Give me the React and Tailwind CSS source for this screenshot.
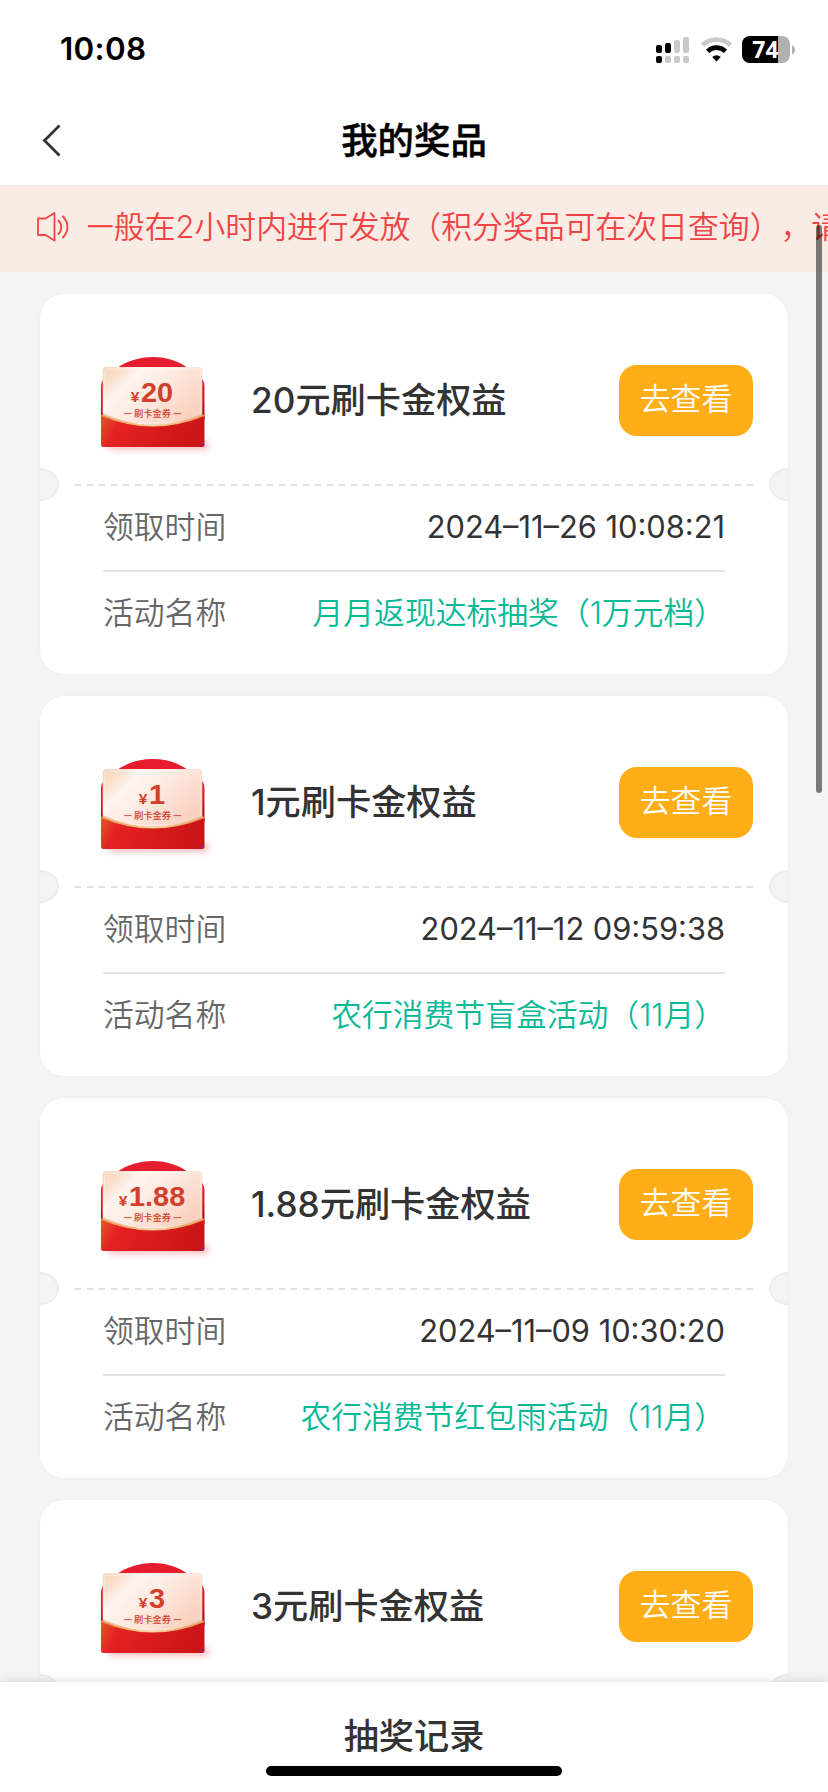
import React from "react";

const prizes = [
  {
    amount: "20",
    title: "20元刷卡金权益",
    time: "2024–11–26 10:08:21",
    activity: "月月返现达标抽奖（1万元档）",
  },
  {
    amount: "1",
    title: "1元刷卡金权益",
    time: "2024–11–12 09:59:38",
    activity: "农行消费节盲盒活动（11月）",
  },
  {
    amount: "1.88",
    title: "1.88元刷卡金权益",
    time: "2024–11–09 10:30:20",
    activity: "农行消费节红包雨活动（11月）",
  },
  {
    amount: "3",
    title: "3元刷卡金权益",
  },
];

function StatusBar() {
  return (
    <div className="flex h-[96px] items-center justify-between pl-[60px] pr-[33px] pt-[4px]">
      <span className="text-[31.4px] font-semibold leading-none tracking-[0.3px] text-black">10:08</span>
      <svg width="140" height="30" viewBox="654 35 140 30">
        <g fill="#c9c9c9">
          <rect x="673" y="40" width="6" height="13" rx="2" />
          <rect x="682" y="37" width="6" height="16" rx="2" />
          <rect x="664" y="56" width="6" height="7" rx="2" />
          <rect x="673" y="56" width="6" height="7" rx="2" />
          <rect x="682" y="56" width="6" height="7" rx="2" />
        </g>
        <rect x="655" y="45" width="6" height="8" rx="2" />
        <rect x="664" y="43" width="6" height="10" rx="2" />
        <rect x="655" y="56" width="6" height="7" rx="2" />
        <g fill="none" strokeWidth="4.6">
          <path d="M701.5 45.2a20.3 20.3 0 0 1 28 0" stroke="#c9c9c9" />
          <path d="M706.6 51.3a12.6 12.6 0 0 1 17.8 0" stroke="#000" />
        </g>
        <path d="M711.2 57a6.2 6.2 0 0 1 8.6 0l-4.3 4.4z" />
        <clipPath id="battery">
          <rect x="741" y="36" width="48" height="27" rx="8" />
        </clipPath>
        <g clipPath="url(#battery)">
          <rect x="741" y="36" width="48" height="27" fill="#b0b0b0" />
          <rect x="741" y="36" width="36" height="27" />
        </g>
        <path d="M791 45.3c4 1.5 4 7.700 0 9.2z" fill="#b0b0b0" />
        <text
          x="764.5"
          y="58"
          textAnchor="middle"
          fill="#fff"
          fontSize="23"
          fontWeight="700"
          fontFamily="'Open Sans'"
        >
          74
        </text>
      </svg>
    </div>
  );
}

function Envelope({ amount }) {
  return (
    <svg width="120" height="106" viewBox="95 350 120 106">
      <defs>
        <linearGradient id="paper" x1="0" y1="0" x2="1" y2="0.6">
          <stop offset="0" stopColor="#f6d6ba" />
          <stop offset="0.15" stopColor="#f9dfcb" />
          <stop offset="0.3" stopColor="#fef4ef" />
          <stop offset="0.55" stopColor="#fdebe2" />
          <stop offset="1" stopColor="#fad2c0" />
        </linearGradient>
        <linearGradient id="front" x1="0" y1="0" x2="1" y2="0.15">
          <stop offset="0" stopColor="#e2582a" />
          <stop offset="0.2" stopColor="#e42123" />
          <stop offset="1" stopColor="#cb1516" />
        </linearGradient>
        <linearGradient id="gold" x1="0" y1="0" x2="1" y2="0">
          <stop offset="0" stopColor="#f08a3c" />
          <stop offset="0.5" stopColor="#f8d79b" />
          <stop offset="1" stopColor="#ee9a4b" />
        </linearGradient>
        <linearGradient id="back" x1="0" y1="0" x2="0" y2="1">
          <stop offset="0" stopColor="#e8202f" />
          <stop offset="0.5" stopColor="#dc1a28" />
          <stop offset="1" stopColor="#8f0c14" />
        </linearGradient>
        <filter id="blur" x="-20%" y="-100%" width="140%" height="300%">
          <feGaussianBlur stdDeviation="3" />
        </filter>
      </defs>
      <rect x="108" y="441" width="101" height="9" rx="4" fill="#f3808c" opacity="0.5" filter="url(#blur)" />
      <path d="M117 368c10-7 22-11 36-11s25 4 35 11v10h-71z" fill="#e51d2e" />
      <path d="M101 420v-33c0-5 2-8 5-10h94c3 2 4.5 5 4.5 10v33z" fill="url(#back)" />
      <rect x="102.7" y="367" width="99.6" height="58" rx="4" fill="url(#paper)" />
      <rect x="104.7" y="369" width="95.6" height="54" rx="3" fill="none" stroke="#fff" strokeOpacity="0.55" strokeWidth="0.8" />
      <path d="M103 416v-3c18 8 34 12 50 12s33-4 50-12v12h-100z" fill="#d9a68c" opacity="0.5" />
      <path
        d="M101 415c19 7.5 35 11 51.5 11s33-3.500 52-11v29.5a2.500 2.500 0 0 1-2.500 2.500h-98.500a2.500 2.500 0 0 1-2.500-2.500z"
        fill="url(#front)"
      />
      <path d="M101 415.3c19 7.5 35 10.5 51.5 10.5s33-3 52-10.5" fill="none" stroke="url(#gold)" strokeWidth="1.5" />
      <circle cx="202.5" cy="444.5" r="1.8" fill="#9a1c86" opacity="0.8" />
      <g fill="#d2402c">
        <text
          transform="translate(152 402) scale(1.07 1)"
          textAnchor="middle"
          fontFamily="'Liberation Sans'"
          fontWeight="700"
          fontSize="27"
        >
          <tspan fontSize="14.5">¥</tspan>
          <tspan dx="1.5">{amount}</tspan>
        </text>
        <text
          x="152.5"
          y="416.5"
          textAnchor="middle"
          fontFamily="'Noto Sans CJK SC'"
          fontWeight="500"
          fontSize="9.3"
        >
          刷卡金券
        </text>
        <rect x="124" y="413.2" width="7.7" height="0.9" />
        <rect x="173.5" y="413.2" width="7.7" height="0.9" />
      </g>
    </svg>
  );
}

function PrizeCard({ prize }) {
  return (
    <div className="relative h-[380px] shrink-0 overflow-hidden rounded-[24px] bg-white shadow-[0_0_3px_rgba(0,0,0,0.04)]">
      <div className="absolute -left-[19px] top-[174px] h-[33px] w-[38px] rounded-[50%] border-2 border-[#ededed] bg-[#f4f4f4]"></div>
      <div className="absolute -right-[19px] top-[174px] h-[33px] w-[38px] rounded-[50%] border-2 border-[#ededed] bg-[#f4f4f4]"></div>

      <div className="flex h-[190px] items-center pl-[55px] pr-[35px]">
        <div className="mt-[28px]">
          <Envelope amount={prize.amount} />
        </div>
        <p className="ml-[36px] mt-[21px] flex-1 text-[35.2px] font-medium leading-[48px] text-[#333]">
          {prize.title}
        </p>
        <button className="mt-[22px] h-[71px] w-[134px] rounded-[18px] bg-[#ffae17] pb-[1px] text-[30.8px] font-[350] text-white">
          去查看
        </button>
      </div>
      <div className="ml-[35px] mr-[34px] h-[2px] bg-[repeating-linear-gradient(90deg,#dfdfdf_0_6px,transparent_6px_12px)]"></div>

      {prize.time && (
        <div className="ml-[63px] mr-[63px] text-[30.8px] font-[350]">
          <div className="flex h-[86px] items-center justify-between border-b-2 border-[#e3e3e3] pb-[2px]">
            <span className="text-[#666]">领取时间</span>
            <span className="font-normal text-[#333]">{prize.time}</span>
          </div>
          <div className="flex h-[84px] items-center justify-between pb-[1px]">
            <span className="text-[#666]">活动名称</span>
            <span className="text-[#06b995]">{prize.activity}</span>
          </div>
        </div>
      )}
    </div>
  );
}

export default function App() {
  return (
    <main className="relative flex h-[1792px] w-[828px] flex-col overflow-hidden bg-[#f4f4f4] font-[Inter,'Noto_Sans_CJK_SC',sans-serif] [text-spacing-trim:space-all]">
      <header className="h-[185px] shrink-0 bg-white">
        <StatusBar />
        <div className="flex h-[89px] items-center px-[42px]">
          <svg width="20" height="34" viewBox="0 0 20 34" fill="none" stroke="#333" strokeWidth="2.8">
            <path d="M17.5 1.500 2.500 16.500l15 15" />
          </svg>
          <h1 className="mr-[20px] flex-1 pt-[1px] text-center text-[36.4px] font-medium leading-none text-black [-webkit-text-stroke:0.5px_black]">
            我的奖品
          </h1>
        </div>
      </header>

      <div className="flex h-[87px] shrink-0 items-center bg-[#f9ece4] pb-[3px] pl-[36px] text-[#f04447]">
        <svg width="34" height="30" viewBox="0 0 34 30" fill="none" stroke="currentColor" strokeWidth="1.8">
          <path d="M2 6.500h7.500L18.500 1v27.500L9.500 23H2z" strokeLinejoin="round" />
          <path d="M22 8c4.300 4 4.300 10.500 0 14.500M26.500 4c6.600 6.500 6.600 15.500 0 22" />
        </svg>
        <div className="ml-[18px] flex-1 overflow-hidden">
          <p className="-ml-[5px] whitespace-nowrap text-[30.85px] font-[350] leading-[46px]">
            一般在2小时内进行发放（积分奖品可在次日查询），请
          </p>
        </div>
      </div>

      <section className="flex flex-1 flex-col gap-[22px] overflow-hidden px-[40px] pt-[22px]">
        {prizes.map((prize) => (
          <PrizeCard key={prize.amount} prize={prize} />
        ))}
      </section>

      <footer className="relative flex h-[110px] shrink-0 flex-col items-center bg-white pt-[30px] shadow-[0_0_10px_rgba(0,0,0,0.14)]">
        <p className="text-[35.2px] font-medium leading-[48px] text-[#333]">抽奖记录</p>
        <div className="mt-[6px] h-[10px] w-[296px] rounded-full bg-black"></div>
      </footer>

      {/* scroll indicator */}
      <div className="absolute right-[6px] top-[225px] h-[568px] w-[6px] rounded-full bg-black/50"></div>
    </main>
  );
}
